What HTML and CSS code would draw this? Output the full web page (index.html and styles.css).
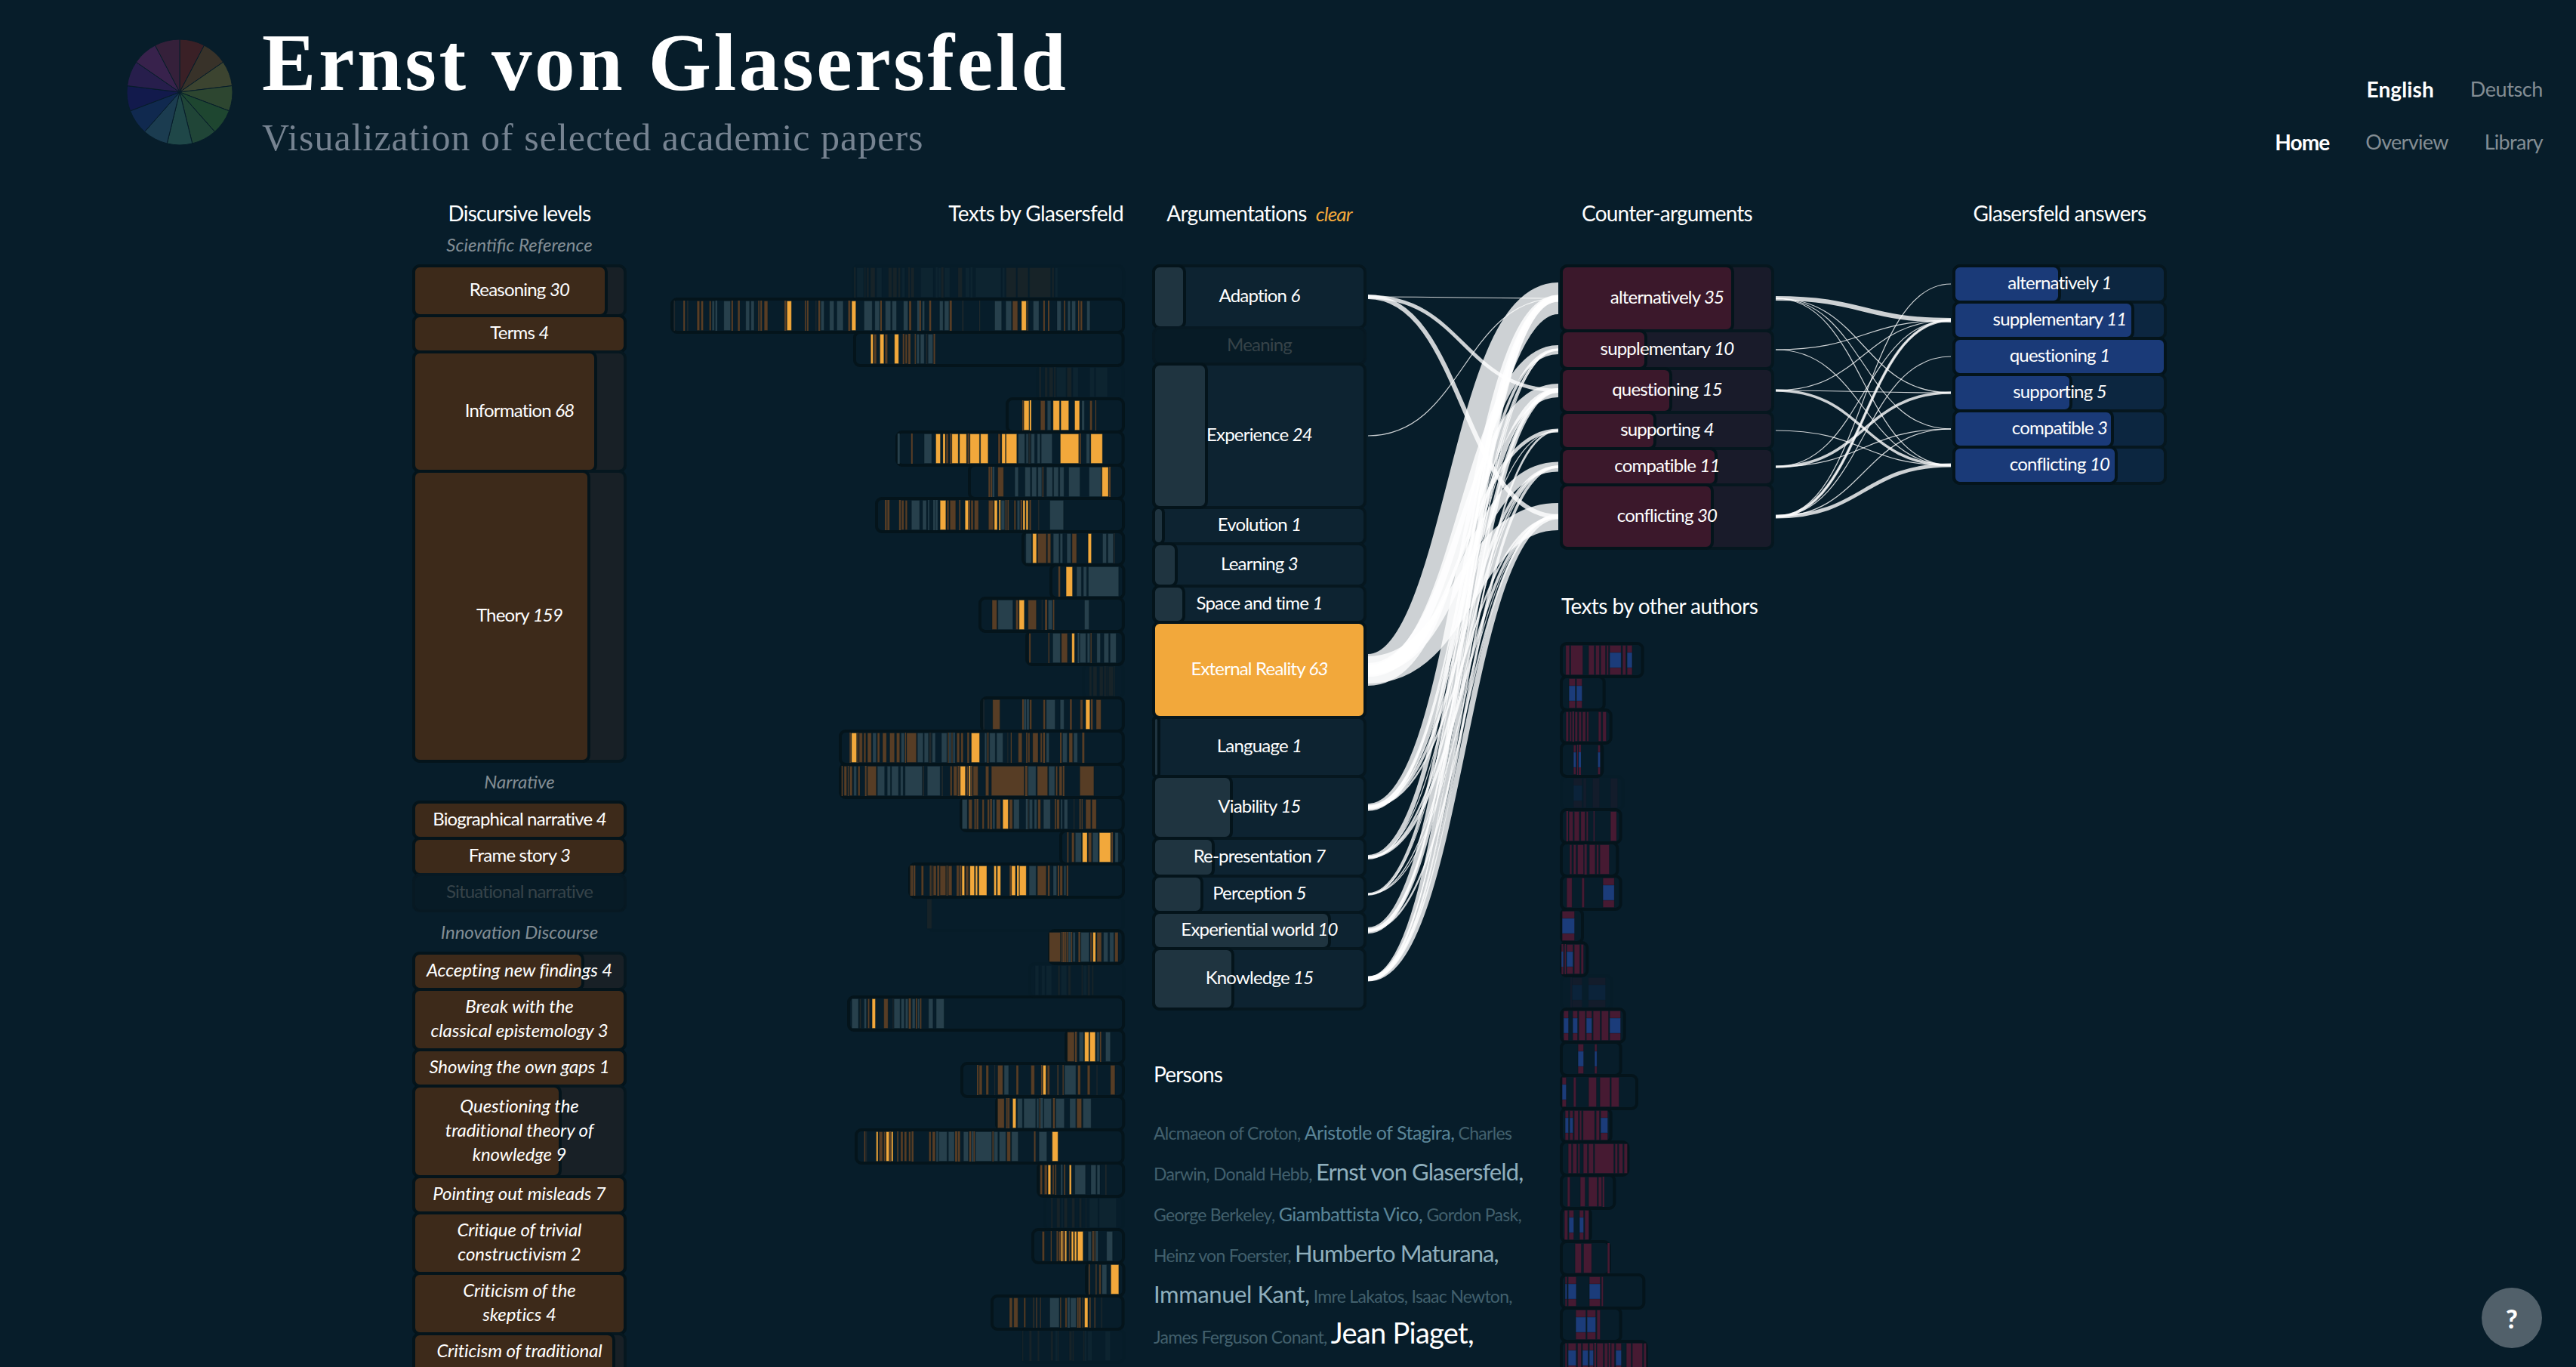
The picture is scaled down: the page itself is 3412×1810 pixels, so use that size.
FILE: index.html
```html
<!DOCTYPE html>
<html lang="en">
<head>
<meta charset="utf-8">
<title>Ernst von Glasersfeld</title>
<link rel="stylesheet" href="styles.css">
</head>
<body>
<header class="top">
  <svg class="wheel" id="wheel" viewBox="-70 -70 140 140" width="140" height="140"></svg>
  <div class="titles">
    <h1>Ernst von Glasersfeld</h1>
    <p>Visualization of selected academic papers</p>
  </div>
  <nav>
    <div class="nav-row langs"><a class="on">English</a><a>Deutsch</a></div>
    <div class="nav-row pages"><a class="on">Home</a><a>Overview</a><a>Library</a></div>
  </nav>
</header>

<main>
  <section class="col levels">
    <div class="head">
      <h2>Discursive levels</h2>
      <h3>Scientific Reference</h3>
    </div>
    <div class="box" style="height:66px"><i class="bar" style="width:255px"></i><span>Reasoning <em>30</em></span></div>
    <div class="box" style="height:48px"><i class="bar" style="width:280px"></i><span>Terms <em>4</em></span></div>
    <div class="box" style="height:158px"><i class="bar" style="width:241px"></i><span>Information <em>68</em></span></div>
    <div class="box" style="height:384px"><i class="bar" style="width:232px"></i><span>Theory <em>159</em></span></div>
    <h3 class="group">Narrative</h3>
    <div class="box" style="height:48px"><i class="bar" style="width:280px"></i><span>Biographical narrative <em>4</em></span></div>
    <div class="box" style="height:48px"><i class="bar" style="width:280px"></i><span>Frame story <em>3</em></span></div>
    <div class="box off" style="height:48px"><span>Situational narrative</span></div>
    <h3 class="group wide">Innovation Discourse</h3>
    <div class="slanted">
      <div class="box" style="height:48px"><i class="bar" style="width:224px"></i><span>Accepting new findings 4</span></div>
      <div class="box" style="height:80px"><i class="bar" style="width:280px"></i><span>Break with the<br>classical epistemology 3</span></div>
      <div class="box" style="height:48px"><i class="bar" style="width:280px"></i><span>Showing the own gaps 1</span></div>
      <div class="box" style="height:120px"><i class="bar" style="width:194px"></i><span>Questioning the<br>traditional theory of<br>knowledge 9</span></div>
      <div class="box" style="height:48px"><i class="bar" style="width:280px"></i><span>Pointing out misleads 7</span></div>
      <div class="box" style="height:80px"><i class="bar" style="width:280px"></i><span>Critique of trivial<br>constructivism 2</span></div>
      <div class="box" style="height:80px"><i class="bar" style="width:280px"></i><span>Criticism of the<br>skeptics 4</span></div>
      <div class="box last" style="height:80px"><i class="bar" style="width:265px"></i><span>Criticism of traditional</span></div>
    </div>
  </section>

  <section class="col texts">
    <div class="head"><h2>Texts by Glasersfeld</h2></div>
    <div class="strips" id="own"></div>
  </section>

  <section class="col args">
    <div class="head"><h2>Argumentations <a class="clear">clear</a></h2></div>
    <div class="box" style="height:82px"><i class="bar" style="width:41px"></i><span>Adaption <em>6</em></span></div>
    <div class="box off" style="height:48px"><span>Meaning</span></div>
    <div class="box" style="height:190px"><i class="bar" style="width:70px"></i><span>Experience <em>24</em></span></div>
    <div class="box" style="height:48px"><i class="bar" style="width:13px"></i><span>Evolution <em>1</em></span></div>
    <div class="box" style="height:56px"><i class="bar" style="width:30px"></i><span>Learning <em>3</em></span></div>
    <div class="box" style="height:48px"><i class="bar" style="width:40px"></i><span>Space and time <em>1</em></span></div>
    <div class="box picked" style="height:126px"><i class="bar" style="width:280px"></i><span>External Reality <em>63</em></span></div>
    <div class="box" style="height:78px"><i class="bar" style="width:7px"></i><span>Language <em>1</em></span></div>
    <div class="box" style="height:82px"><i class="bar" style="width:103px"></i><span>Viability <em>15</em></span></div>
    <div class="box" style="height:50px"><i class="bar" style="width:79px"></i><span>Re-presentation <em>7</em></span></div>
    <div class="box" style="height:48px"><i class="bar" style="width:64px"></i><span>Perception <em>5</em></span></div>
    <div class="box" style="height:48px"><i class="bar" style="width:233px"></i><span>Experiential world <em>10</em></span></div>
    <div class="box" style="height:80px"><i class="bar" style="width:105px"></i><span>Knowledge <em>15</em></span></div>
    <div class="persons">
      <h2>Persons</h2>
      <p><a>Alcmaeon of Croton,</a> <a class="p2">Aristotle of Stagira,</a> <a>Charles</a></p>
      <p><a>Darwin,</a> <a>Donald Hebb,</a> <a class="p3">Ernst von Glasersfeld,</a></p>
      <p><a>George Berkeley,</a> <a class="p2">Giambattista Vico,</a> <a>Gordon Pask,</a></p>
      <p><a>Heinz von Foerster,</a> <a class="p3">Humberto Maturana,</a></p>
      <p><a class="p3 wide">Immanuel Kant,</a> <a>Imre Lakatos,</a> <a>Isaac Newton,</a></p>
      <p><a>James Ferguson Conant,</a> <a class="p4">Jean Piaget,</a></p>
    </div>
  </section>

  <svg class="links" id="links-left" width="260" height="1000"></svg>

  <section class="col counter">
    <div class="head"><h2>Counter-arguments</h2></div>
    <div class="box" style="height:86px"><i class="bar" style="width:227px"></i><span>alternatively <em>35</em></span></div>
    <div class="box" style="height:50px"><i class="bar" style="width:112px"></i><span>supplementary <em>10</em></span></div>
    <div class="box" style="height:58px"><i class="bar" style="width:145px"></i><span>questioning <em>15</em></span></div>
    <div class="box" style="height:48px"><i class="bar" style="width:124px"></i><span>supporting <em>4</em></span></div>
    <div class="box" style="height:48px"><i class="bar" style="width:205px"></i><span>compatible <em>11</em></span></div>
    <div class="box" style="height:84px"><i class="bar" style="width:200px"></i><span>conflicting <em>30</em></span></div>
    <h2 class="others-title">Texts by other authors</h2>
    <div class="strips" id="others"></div>
  </section>

  <svg class="links" id="links-right" width="240" height="1000"></svg>

  <section class="col answers">
    <div class="head"><h2>Glasersfeld answers</h2></div>
    <div class="box" style="height:48px"><i class="bar" style="width:140px"></i><span>alternatively <em>1</em></span></div>
    <div class="box" style="height:48px"><i class="bar" style="width:237px"></i><span>supplementary <em>11</em></span></div>
    <div class="box" style="height:48px"><i class="bar" style="width:280px"></i><span>questioning <em>1</em></span></div>
    <div class="box" style="height:48px"><i class="bar" style="width:155px"></i><span>supporting <em>5</em></span></div>
    <div class="box" style="height:48px"><i class="bar" style="width:210px"></i><span>compatible <em>3</em></span></div>
    <div class="box" style="height:48px"><i class="bar" style="width:215px"></i><span>conflicting <em>10</em></span></div>
  </section>
</main>

<button class="help">?</button>
<script src="charts.js"></script>
</body>
</html>
```
FILE: styles.css
```css
:root {
  --bg: #071d2a;
  --edge: #04141b;
}
* { box-sizing: border-box; }
html { overflow: hidden; }
body {
  margin: 0;
  width: 3412px;
  height: 1810px;
  overflow: hidden;
  background: var(--bg);
  color: #fff;
  font-family: Lato, "Open Sans", sans-serif;
}
h1, h2, h3, p { margin: 0; font-weight: 400; }

/* header */
.top {
  display: flex;
  height: 260px;
  padding: 0 44px 0 168px;
}
.wheel { margin-top: 52px; flex: none; }
.titles {
  margin-left: 39px;
  padding-top: 22px;
  font-family: "Liberation Serif", serif;
  white-space: nowrap;
}
.titles h1 {
  font-size: 107px;
  line-height: 122px;
  font-weight: 700;
  letter-spacing: 3.6px;
}
.titles p {
  margin-top: 9px;
  font-size: 50px;
  line-height: 58px;
  letter-spacing: 1px;
  color: #768391;
}
nav {
  margin-left: auto;
  padding-top: 83px;
  display: flex;
  flex-direction: column;
}
.nav-row {
  display: flex;
  justify-content: flex-end;
  gap: 48px;
  height: 70px;
  line-height: 70px;
  font-size: 27px;
  letter-spacing: -0.7px;
  color: #838d94;
}
.langs { letter-spacing: -0.4px; }
.nav-row .on {
  color: #fff;
  font-weight: 700;
  font-size: 28px;
}
.langs .on { letter-spacing: 0.1px; }
.pages .on { letter-spacing: -0.9px; }

/* columns */
main {
  display: grid;
  grid-template-columns: 280px 660px 40px 280px 260px 280px 240px 280px;
  align-items: start;
  height: 1550px;
  overflow: hidden;
  padding-left: 548px;
}
.texts { grid-column: 2; }
.args { grid-column: 4; }
.head { display: flow-root; height: 92px; text-align: center; }
.head h2 { margin: -1px 0 1px; }
h2 {
  font-size: 28px;
  line-height: 46px;
  letter-spacing: -0.8px;
  white-space: nowrap;
}
h3 {
  font-size: 24px;
  line-height: 36px;
  font-style: italic;
  text-align: center;
  color: #838e95;
}
.group { line-height: 54px; }
.group.wide { line-height: 56px; }
.texts .head { text-align: right; }
.texts h2 { letter-spacing: -0.6px; }
.clear {
  margin-left: 6px;
  font-size: 26px;
  font-style: italic;
  letter-spacing: -0.9px;
  color: #f2a83b;
}

/* labelled boxes */
.box {
  position: relative;
  display: flex;
  align-items: center;
  justify-content: center;
  text-align: center;
  border-radius: 8px;
  border: 2px solid #06171f;
  box-shadow: 0 0 0 2px #06171f;
  background: var(--dim);
  font-size: 24px;
  line-height: 32px;
  letter-spacing: -0.8px;
  white-space: nowrap;
}
.box span { position: relative; top: -2px; }
.bar {
  position: absolute;
  left: -2px;
  top: -2px;
  bottom: -2px;
  border-radius: 8px;
  border: 2px solid var(--edge);
  box-shadow: 0 0 0 2px var(--edge);
  background: var(--fill);
}
.slanted .box { font-style: italic; letter-spacing: -0.1px; }
.box.last { align-items: flex-start; padding-top: 6px; }
.levels { --fill: #3d2a1a; --dim: #182026; }
.args { --fill: #1f3440; --dim: #0d2331; }
.counter { --fill: #3b182b; --dim: #191b2a; }
.answers { --fill: #1a3a78; --dim: #0c2640; }
.box.off {
  background: #071b26;
  border-color: #071923;
  box-shadow: 0 0 0 2px #071923;
  color: #364349;
}
.box.off + .box { z-index: 1; }
.picked { --fill: #f2a83b; }

/* reading strips */
.strips {
  display: flex;
  flex-direction: column;
}
.strip { height: 44px; display: block; overflow: visible; flex: none; }
.texts .strip { align-self: flex-end; }
.strip.faint { opacity: 0.2; }
.frame { fill: none; stroke: var(--edge); stroke-width: 4; }
.faint .frame { stroke-opacity: 0.4; }
.b { fill: #573d25; }
.t { fill: #27404c; }
.o { fill: #f2a83b; }
.d { fill: #20282b; }
.m { fill: #461a32; }
.u { fill: #1b3c7a; }
.mark { stroke: var(--edge); stroke-opacity: 0.3; stroke-width: 1; }
.others-title { margin-top: 53px; margin-bottom: 27px; letter-spacing: -0.6px; }

/* links */
.links { margin-top: 92px; overflow: visible; }
.links path { fill: none; stroke: #fff; stroke-opacity: 0.8; }

/* persons */
.persons { width: 520px; margin-top: 63px; }
.persons h2 { margin-bottom: 28px; }
.persons p {
  height: 54px;
  line-height: 54px;
  font-size: 23px;
  letter-spacing: -0.7px;
  white-space: nowrap;
  color: #42606d;
}
.persons a { line-height: 0; }
.p2 { font-size: 25px; letter-spacing: -0.5px; color: #5a8598; }
.p3 { font-size: 31px; letter-spacing: -0.9px; color: #8fafbd; }
.p3.wide { letter-spacing: -0.4px; }
.p4 { font-size: 38px; letter-spacing: -0.7px; color: #fff; }

.help {
  position: fixed;
  right: 45px;
  bottom: 25px;
  width: 80px;
  height: 80px;
  padding: 0;
  border: 0;
  border-radius: 50%;
  background: #51606a;
  color: #fff;
  font: 900 34px Lato, sans-serif;
}
```
FILE: charts.js
```js
const NS = 'http://www.w3.org/2000/svg';

function add(parent, tag, attrs) {
  const el = document.createElementNS(NS, tag);
  for (const key in attrs) el.setAttribute(key, attrs[key]);
  parent.appendChild(el);
  return el;
}

/* colour wheel */
const wheel = document.getElementById('wheel');
['#3a2026', '#383229', '#3c4430', '#2d4630', '#1e4630', '#204537', '#1f4748',
 '#1b3c50', '#10294f', '#121a4c', '#271e4c', '#38224c', '#35203a'].forEach((c, i) => {
  const a = i * 2 * Math.PI / 13, b = (i + 1) * 2 * Math.PI / 13;
  add(wheel, 'path', {
    d: `M0 0L${70 * Math.sin(a)} ${-70 * Math.cos(a)}A70 70 0 0 1 ${70 * Math.sin(b)} ${-70 * Math.cos(b)}Z`,
    fill: c, stroke: '#071d2a', 'stroke-width': 1
  });
});

/* Each text: "outer edge | marks". A mark is a kind letter and its start-end; "~" means a text without hits. */
const own = [
'~632|b640-645 t648-672 b674-677 b680-689 b692-709 t712-731 b750-764 b765-780 b782-791 t794-806 b816-821 b823-836 t855-898 t905-911 t912-923 b923-930 t932-952 b976-992 t1000-1016 t1018-1024 t1033-1118 t1120-1130 b1132-1167 b1169-1206 b1208-1279 b1281-1290 t1291-1302',
'44|d55-59 b86-91 d98-102 b129-140 b142-152 b169-177 t178-188 t190-196 t216-240 b242-247 b263-269 t287-302 t304-317 b329-333 b336-341 b347-361 b414-420 o421-438 b480-484 b487-492 d515-518 b524-530 t531-544 t559-576 t583-606 b621-628 o631-647 t671-700 t706-724 b725-730 t740-760 t762-779 t799-816 b817-827 t845-852 b852-857 t860-870 b884-890 t916-930 t932-949 b950-957 d991-995 d1046-1049 t1095-1120 t1131-1152 b1153-1172 o1182-1200 b1202-1205 t1220-1241 b1254-1259 b1269-1274 t1297-1313 b1321-1325 t1332-1343 t1345-1360 b1367-1371 b1373-1382 t1394-1407',
'638|o694-704 b704-715 o724-739 b740-751 o771-787 b799-804 b806-815 b817-824 b838-841 t843-854 t855-870 d875-879 t880-898 b899-904',
'~1230|b1241-1247 b1258-1269 b1272-1287 b1289-1294 t1296-1329 b1330-1347 t1349-1369 t1404-1421 t1423-1464',
'1132|b1186-1190 o1190-1209 o1210-1215 b1244-1261 t1266-1280 o1285-1308 o1310-1338 o1355-1373 t1378-1389 b1404-1414 b1423-1426',
'775|t782-789 b826-831 t867-894 o905-922 o928-938 b938-948 b952-957 o957-980 o982-1007 b1009-1015 o1016-1049 o1050-1077 b1107-1117 o1119-1133 o1133-1170 t1172-1196 t1198-1207 d1207-1213 t1214-1228 t1234-1246 t1247-1285 o1309-1371 b1372-1377 t1393-1407 o1408-1448',
'1009|b1076-1081 b1083-1088 t1089-1095 b1105-1126 t1160-1174 t1193-1213 t1215-1233 t1235-1250 b1251-1254 t1263-1285 t1286-1304 t1306-1322 t1335-1374 t1401-1443 o1443-1466 b1467-1472',
'708|b740-746 b748-755 b786-792 b793-803 b805-814 t825-854 t861-876 t880-884 t897-903 t905-911 o918-939 b940-949 b950-971 b981-985 o999-1012 b1012-1017 b1018-1028 b1029-1045 b1075-1094 o1094-1106 o1111-1115 t1116-1130 b1131-1135 b1138-1142 b1158-1166 t1168-1179 b1180-1186 o1187-1196 o1197-1206 b1209-1214 d1237-1241 t1274-1321',
'1183|t1196-1217 o1218-1233 b1234-1265 b1266-1279 t1285-1306 t1307-1318 t1329-1345 b1346-1363 o1398-1411 t1445-1460 t1462-1482 d1482-1486',
'1273|b1302-1308 o1326-1349 t1360-1378 t1382-1395 t1398-1499',
'1044|b1087-1105 t1106-1157 b1164-1175 o1175-1194 b1204-1233 d1249-1252 b1260-1267 t1269-1285 b1286-1290 t1387-1404',
'1196|b1207-1215 b1271-1274 t1284-1311 b1312-1334 o1346-1357 t1366-1371 t1372-1394 t1396-1407 b1408-1411 t1427-1441 t1450-1468 t1470-1492',
'~1380|b1403-1413 b1415-1430 b1436-1450 b1452-1458 b1460-1463 b1465-1483 b1484-1487',
'1049|d1060-1063 b1089-1115 b1186-1191 t1192-1199 t1201-1208 b1209-1218 b1253-1262 t1263-1294 t1308-1323 b1341-1347 b1373-1384 o1391-1407 b1409-1415 b1425-1443',
'591|b626-630 o631-650 b651-655 b656-669 b671-680 b683-698 t700-714 b715-725 b732-747 b755-773 b777-790 t792-805 b806-809 b810-844 t845-866 t867-883 d884-891 t893-906 t923-943 b945-948 t949-955 b957-960 t962-968 b973-984 b986-996 b1008-1014 o1020-1049 t1063-1072 b1073-1077 t1079-1100 t1102-1125 d1138-1141 b1149-1152 b1172-1187 b1199-1203 b1204-1212 b1219-1239 b1244-1252 b1254-1260 t1263-1275 b1309-1314 t1316-1333 b1337-1351 t1352-1367 b1381-1388',
'591|b600-604 b607-618 b620-623 b625-636 t638-650 b652-661 b676-681 b683-714 t715-741 t747-760 t761-786 t790-801 t805-863 d864-868 t877-921 d925-929 b951-960 b962-976 b977-983 o984-1003 b1004-1013 o1014-1018 b1019-1025 b1026-1044 b1066-1079 b1085-1194 b1196-1203 t1204-1232 b1234-1270 t1271-1293 b1294-1302 b1305-1317 b1318-1323 b1372-1420',
'983|t990-1009 b1011-1025 b1031-1036 b1038-1044 b1055-1064 b1072-1081 b1082-1088 t1089-1099 b1101-1117 o1122-1142 b1143-1156 t1157-1178 t1198-1205 d1204-1208 t1208-1221 t1224-1235 b1236-1247 t1254-1279 b1292-1296 b1297-1308 t1310-1318 t1321-1335 d1353-1356 b1372-1376 b1379-1382 b1391-1410 b1411-1428',
'1306|b1332-1336 b1345-1356 t1357-1379 o1380-1398 b1399-1412 t1413-1434 o1435-1474 b1475-1480 t1486-1499',
'816|b822-825 b826-831 b833-839 b857-867 b886-889 b891-894 b896-908 b910-917 b918-939 b940-944 b945-959 b973-980 b982-989 o989-1000 b1001-1013 o1015-1032 o1033-1042 o1044-1072 o1093-1103 o1104-1117 b1145-1150 o1150-1165 o1169-1175 o1176-1200 t1207-1232 b1234-1265 b1269-1275 t1285-1299 b1301-1306 b1307-1318 t1320-1329 b1330-1335',
'~875|b876-894',
'1270|b1273-1312 b1314-1318 b1319-1324 b1325-1330 b1332-1336 t1337-1344 b1345-1349 t1350-1360 b1369-1375 t1376-1405 b1406-1414 o1415-1426 b1428-1445 t1449-1466 t1469-1485 b1486-1499',
'~1205|t1226-1240 t1247-1260 t1262-1282 b1300-1309 t1310-1331 b1333-1344 b1378-1382 t1382-1396 b1398-1405 b1410-1418',
'617|t631-655 d656-664 t671-681 b683-691 o697-710 b735-751 d765-768 t768-790 t791-804 t805-816 b817-824 t827-839 b840-844 t845-853 b854-858 t880-897 t905-933',
'1322|b1330-1355 b1356-1362 t1368-1385 o1386-1402 o1403-1423 t1425-1437 b1437-1441 t1454-1472',
'985|b1039-1044 b1045-1057 b1067-1078 d1095-1098 b1105-1124 t1126-1143 b1165-1175 b1213-1227 b1247-1251 o1252-1264 b1266-1276 b1300-1303 b1317-1320 t1322-1361 b1365-1376 b1396-1407 d1427-1430 b1471-1488',
'1097|b1104-1128 b1133-1138 b1139-1144 o1153-1166 t1168-1187 t1189-1230 t1231-1240 b1241-1244 t1245-1252 t1254-1281 b1285-1291 t1293-1323 t1338-1360 b1361-1379 t1381-1410',
'643|b674-678 d680-683 o712-720 b721-735 b736-744 o744-756 b756-761 o761-769 b781-785 b791-801 b803-813 b817-826 b828-834 b883-892 b894-906 t908-914 t915-944 t946-968 b969-976 b978-985 t995-1013 b1015-1021 t1023-1029 b1029-1033 t1034-1089 b1090-1094 t1094-1109 t1111-1135 b1136-1150 t1151-1175 b1225-1230 t1240-1268 o1283-1304',
'1232|b1242-1252 b1256-1268 o1268-1279 b1282-1290 b1292-1296 t1311-1316 b1321-1325 o1337-1346 t1355-1392 t1407-1426 t1427-1439 d1455-1459',
'~1255|b1280-1285 b1297-1310 t1312-1320 b1321-1334 b1346-1358 b1370-1380 b1392-1394 t1403-1433 t1435-1493',
'1215|b1249-1259 b1278-1281 b1297-1301 b1302-1312 o1312-1317 b1317-1324 o1325-1329 b1337-1341 o1344-1353 o1354-1363 o1364-1384 t1398-1411 b1413-1418 b1420-1423 t1425-1431 t1458-1480',
'1388|b1400-1404 b1423-1426 b1433-1441 t1442-1460 o1471-1499',
'1084|b1144-1156 b1158-1174 b1191-1199 b1223-1225 b1232-1235 b1245-1247 t1275-1308 b1310-1313 b1325-1333 t1334-1341 t1342-1363 b1365-1370 b1371-1377 b1382-1384 o1388-1401 b1405-1409 b1421-1424 d1443-1446',
'~1180|b1185-1188 b1208-1215 b1235-1240 b1276-1286 t1293-1299 b1300-1303 b1336-1347 b1348-1352 b1383-1387 t1388-1393 t1396-1413 t1453-1472'
];
const others = [
'413|m100-118 m120-171 m191-216 m219-237 m239-261 m263-273 u275-323 m326-342 u344-367',
'260|u113-141 u143-168',
'287|m101-114 m116-126 m128-135 m137-150 m152-165 m167-182 m184-194 m230-244 m247-264',
'253|u131-144 m147-150 u153-162 u228-240',
'~335|u131-168 m170-185 m207-237 m278-309',
'326|m104-111 m113-132 m134-157 m160-180 m182-192 m212-216 m278-305',
'313|m116-127 m131-144 m147-174 m176-185 m194-220 m223-234 m236-276',
'326|m104-128 m164-177 u248-296',
'174|u86-138',
'193|u85-91 m93-95 m98-102 u104-132 m134-159 m161-174',
'~290|m120-126 u126-168 u190-261',
'341|u92-114 u128-150 m152-181 u182-207 m209-240 m242-273 u275-321',
'326|u149-174 u215-227',
'390|u86-105 m131-144 m191-225 m236-279 m281-315',
'287|u98-114 u116-132 m134-153 m155-166 m169-218 m221-237 u239-270',
'355|m110-126 m128-147 m149-159 m170-189 m191-213 m215-294 m296-309 m311-330 m332-348',
'301|m107-120 m158-180 m191-228 m230-246 m248-255',
'206|m95-111 u113-135 u155-174 m176-195',
'281|m137-165 m171-206 m268-276',
'418|u98-108 u110-145 u194-240 m242-252',
'326|u140-183 u185-222 m224-240',
'428|m98-108 u110-144 m147-165 u167-192 u194-213 m215-222 m224-252 m254-270 m272-279 m281-297 u299-324 m341-363 m365-408 m410-423'
];

/* scale: data units per pixel; origin: pixel position of data zero inside the strip column */
function drawStrips(id, rows, scale, origin, fullWidth, fromRight) {
  const root = document.getElementById(id);
  for (const row of rows) {
    const [edge, marks] = row.replace('~', '').split('|');
    const px = v => v / scale - origin;
    const edgePx = fromRight ? px(+edge) + 2 : px(+edge) - 2;
    const start = fromRight ? edgePx : 0;
    const width = fromRight ? fullWidth - edgePx : edgePx;
    const svg = add(root, 'svg', { class: row[0] === '~' ? 'strip faint' : 'strip', width, height: 44 });
    add(svg, 'rect', { class: 'frame', x: 0, y: 0, width, height: 44, rx: 7 });
    for (const m of marks.split(' ')) {
      const [a, b] = m.slice(1).split('-').map(Number);
      const x = px(a) - start, w = (b - a) / scale;
      const kind = m[0] === 'u' ? 'm' : m[0];
      const edgeLine = w > 3 ? ' mark' : '';
      const inset = w > 3 ? 0.5 : 0;
      add(svg, 'rect', { class: kind + edgeLine, x: x + inset, y: 2 + inset, width: w - 2 * inset, height: 40 - 2 * inset });
      if (m[0] === 'u') add(svg, 'rect', { class: 'u' + edgeLine, x: x + inset, y: 12, width: w - 2 * inset, height: 20 });
    }
  }
}
drawStrips('own', own, 2.45, -42, 660, true);
drawStrips('others', others, 3, 28, 280, false);

/* weighted links between box centres */
function drawLinks(id, x0, x1, from, to, links) {
  const svg = document.getElementById(id);
  const mid = (x0 + x1) / 2;
  for (const [a, b, w] of links) {
    add(svg, 'path', {
      d: `M${x0} ${from[a]}C${mid} ${from[a]} ${mid} ${to[b]} ${x1} ${to[b]}`,
      'stroke-width': w
    });
  }
}
const counter = { alt: 43, sup: 111, que: 165, spp: 218, com: 266, con: 332 };
drawLinks('links-left', 4, 256,
  { ada: 41, exp: 225, ext: 535, via: 717, rep: 783, per: 832, wor: 880, kno: 944 },
  counter, [
  ['ada', 'alt', 1.2], ['ada', 'que', 4.8], ['ada', 'con', 6], ['exp', 'alt', 1.2],
  ['ext', 'alt', 42], ['ext', 'sup', 12], ['ext', 'que', 18], ['ext', 'spp', 4.8], ['ext', 'com', 13.2], ['ext', 'con', 36],
  ['via', 'alt', 9.6], ['via', 'sup', 3.6], ['via', 'que', 6], ['via', 'spp', 1.2], ['via', 'com', 3.6], ['via', 'con', 2.4],
  ['rep', 'alt', 6], ['rep', 'que', 1.2], ['rep', 'com', 2.4], ['rep', 'con', 3.6],
  ['per', 'alt', 3.6], ['per', 'sup', 1.2], ['per', 'com', 1.2], ['per', 'con', 1.2],
  ['wor', 'alt', 8.4], ['wor', 'sup', 2.4], ['wor', 'que', 4.8], ['wor', 'con', 2.4],
  ['kno', 'alt', 6], ['kno', 'sup', 1.2], ['kno', 'que', 6], ['kno', 'spp', 2.4], ['kno', 'com', 3.6], ['kno', 'con', 7.2]
]);
drawLinks('links-right', 4, 236, counter,
  { alt: 24, sup: 72, que: 120, spp: 168, com: 216, con: 264 }, [
  ['alt', 'sup', 6], ['alt', 'spp', 1.2], ['alt', 'com', 1.2], ['alt', 'con', 1.2],
  ['sup', 'sup', 1.2], ['sup', 'con', 1.2],
  ['que', 'sup', 1.2], ['que', 'spp', 1.2], ['que', 'con', 3.6],
  ['spp', 'con', 1.2],
  ['com', 'sup', 1.2], ['com', 'spp', 3.6], ['com', 'com', 1.2],
  ['con', 'alt', 1.2], ['con', 'sup', 3.6], ['con', 'sup', 1.2], ['con', 'que', 1.2], ['con', 'com', 1.2], ['con', 'con', 4.8]
]);
```
